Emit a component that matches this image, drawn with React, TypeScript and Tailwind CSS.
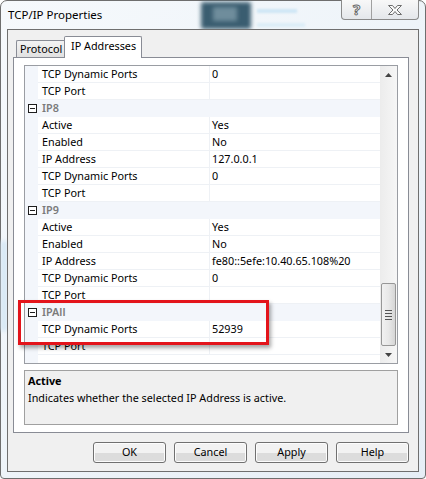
import { Fragment } from 'react'

type Row = { kind: 'cat'; name: string } | { kind: 'prop'; label: string; value: string }

const rows: Row[] = [
  { kind: 'prop', label: 'TCP Dynamic Ports', value: '0' },
  { kind: 'prop', label: 'TCP Port', value: '' },
  { kind: 'cat', name: 'IP8' },
  { kind: 'prop', label: 'Active', value: 'Yes' },
  { kind: 'prop', label: 'Enabled', value: 'No' },
  { kind: 'prop', label: 'IP Address', value: '127.0.0.1' },
  { kind: 'prop', label: 'TCP Dynamic Ports', value: '0' },
  { kind: 'prop', label: 'TCP Port', value: '' },
  { kind: 'cat', name: 'IP9' },
  { kind: 'prop', label: 'Active', value: 'Yes' },
  { kind: 'prop', label: 'Enabled', value: 'No' },
  { kind: 'prop', label: 'IP Address', value: 'fe80::5efe:10.40.65.108%20' },
  { kind: 'prop', label: 'TCP Dynamic Ports', value: '0' },
  { kind: 'prop', label: 'TCP Port', value: '' },
  { kind: 'cat', name: 'IPAll' },
  { kind: 'prop', label: 'TCP Dynamic Ports', value: '52939' },
  { kind: 'prop', label: 'TCP Port', value: '' },
]

function MinusBox() {
  return (
    <div className="w-[9px] h-[9px] border border-[#1e1e1e] bg-white flex items-center justify-center">
      <div className="w-[5px] h-px bg-[#1e1e1e]" />
    </div>
  )
}

function Button({ label }: { label: string }) {
  return (
    <div className="w-[73px] h-[21px] rounded-[3px] border border-[#707070] bg-gradient-to-b from-[#f2f2f2] from-50% to-[#dcdcdc] to-50% flex items-center justify-center text-black shadow-[inset_0_0_0_1px_#fcfcfc]">
      {label}
    </div>
  )
}

export default function App() {
  return (
    <div className="relative w-[426px] h-[479px] bg-white overflow-hidden text-[10.8px]" style={{ fontFamily: '"Noto Sans", "Open Sans", sans-serif' }}>
      {/* glass frame */}
      <div className="relative h-full w-full rounded-t-[7px] rounded-b-[4px] border border-[#6e6e6e] bg-gradient-to-br from-[#f6f9fc] via-[#eef4f9] to-[#e6eef6] flex flex-col px-[6px] pb-[6px]">
        {/* blurred desktop behind glass */}
        <div className="absolute left-[200px] top-[1px] w-[50px] h-[27px] bg-[#3a5d70] blur-[2px] rounded-[2px]" />
        <div className="absolute left-[212px] top-[6px] w-[24px] h-[14px] bg-[#6f8d9c] blur-[2px]" />
        <div className="absolute left-[256px] top-[8px] w-[40px] h-[4px] bg-[#cfe6f5] blur-[1px]" />
        <div className="absolute left-[256px] top-[22px] w-[48px] h-[4px] bg-[#dcedf7] blur-[1px]" />
        <div className="absolute left-[0px] top-[240px] w-[6px] h-[90px] bg-[#d4e6f4] blur-[2px]" />

        {/* title bar */}
        <div className="relative h-[28px] flex items-center pl-[1px] pb-[1px] text-[11.5px] text-black">TCP/IP Properties</div>
        <div className="absolute top-[-1px] right-[6px] flex h-[20px] rounded-b-[4px] border border-[#8a8a8a] border-t-0 bg-gradient-to-b from-[#f8f8f8] to-[#e4e7eb] overflow-hidden">
          <div className="w-[29px] flex items-center justify-center text-[15px] font-bold text-white [-webkit-text-stroke:1px_#6a6a6a]">?</div>
          <div className="w-[47px] border-l border-[#a0a0a0] flex items-center justify-center">
            <svg width="16" height="12" viewBox="0 0 16 12">
              <path d="M1.5 1.5h4l2.5 3 2.5-3h4l-4.5 4.5 4.5 4.5h-4l-2.5-3-2.5 3h-4l4.5-4.5z" fill="#fafafa" stroke="#6d6d6d" strokeWidth="1" />
            </svg>
          </div>
        </div>

        {/* client area */}
        <div className="relative flex-1 border border-[#6f6f6f] bg-[#f0f0f0] flex flex-col pl-[5px] pr-[7px] pt-[6px] text-black">
          {/* tabs */}
          <div className="flex items-end pl-[3px] h-[21px] relative z-10 whitespace-nowrap">
            <div className="w-[48px] h-[17px] border border-b-0 border-r-0 border-[#898c95] rounded-tl-[2px] bg-gradient-to-b from-[#f3f3f3] to-[#e1e1e1] flex items-center pl-[3px] pt-[1px] overflow-hidden">
              Protocol
            </div>
            <div className="w-[78px] h-[22px] -mb-px border border-b-0 border-[#898c95] rounded-t-[2px] bg-white flex items-center pl-[6px] pb-[2px]">
              IP Addresses
            </div>
          </div>

          {/* tab panel */}
          <div className="w-[396px] h-[376px] border border-[#898c95] bg-white flex flex-col px-[10px] pt-[7px] pb-[7px]">
            {/* property grid */}
            <div className="h-[299px] border border-[#9a9da3] flex">
              <div className="flex-1 flex flex-col bg-white">
                {rows.map((r, i) => (
                  <Fragment key={i}>
                    {r.kind === 'cat' ? (
                      <div className="h-[17px] flex items-center bg-[#f3f6fb] border-b border-[#f3f6fb]">
                        <div className="w-[13px] flex justify-center pl-px">
                          <MinusBox />
                        </div>
                        <div className="pl-[4px] font-semibold text-[#7a7a7a]">{r.name}</div>
                      </div>
                    ) : (
                      <div className="h-[17px] flex">
                        <div className="w-[13px] bg-[#f3f6fb]" />
                        <div className="w-[172px] border-b border-r border-[#eef1f5] pl-[4px] flex items-center">{r.label}</div>
                        <div className="flex-1 border-b border-[#eef1f5] pl-[2px] flex items-center">{r.value}</div>
                      </div>
                    )}
                  </Fragment>
                ))}
                <div className="flex-1 flex">
                  <div className="w-[13px] bg-[#f3f6fb]" />
                </div>
              </div>
              {/* scrollbar */}
              <div className="w-[17px] bg-gradient-to-r from-[#ececec] to-[#f6f6f6] flex flex-col items-center">
                <div className="h-[17px] flex items-center justify-center">
                  <svg width="7" height="4" viewBox="0 0 7 4"><path d="M0 4L3.5 0 7 4z" fill="#444" /></svg>
                </div>
                <div className="flex-1" />
                <div className="w-[15px] h-[63px] rounded-[2px] border border-[#979797] bg-gradient-to-r from-[#f1f1f1] via-[#e8e8e8] to-[#d6d6d6] flex flex-col items-center justify-center gap-[2px]">
                  <div className="w-[7px] h-px bg-[#555]" />
                  <div className="w-[7px] h-px bg-[#555]" />
                  <div className="w-[7px] h-px bg-[#555]" />
                  <div className="w-[7px] h-px bg-[#555]" />
                </div>
                <div className="h-[17px] flex items-center justify-center">
                  <svg width="7" height="4" viewBox="0 0 7 4"><path d="M0 0L3.5 4 7 0z" fill="#444" /></svg>
                </div>
              </div>
            </div>

            {/* description */}
            <div className="mt-[6px] h-[55px] border border-[#a0a0a0] bg-[#f0f0f0] pl-[3px] pt-[1px] leading-[17px]">
              <div className="font-bold">Active</div>
              <div>Indicates whether the selected IP Address is active.</div>
            </div>
          </div>

          {/* buttons */}
          <div className="flex justify-end gap-[8px] w-[396px] mt-[9px]">
            <Button label="OK" />
            <Button label="Cancel" />
            <Button label="Apply" />
            <Button label="Help" />
          </div>
        </div>
      </div>

      {/* red highlight */}
      <div className="absolute left-[18px] top-[300px] w-[251px] h-[45px] border-[3px] border-[#e3141b] shadow-[2px_3px_4px_rgba(0,0,0,0.35)]" />
    </div>
  )
}
